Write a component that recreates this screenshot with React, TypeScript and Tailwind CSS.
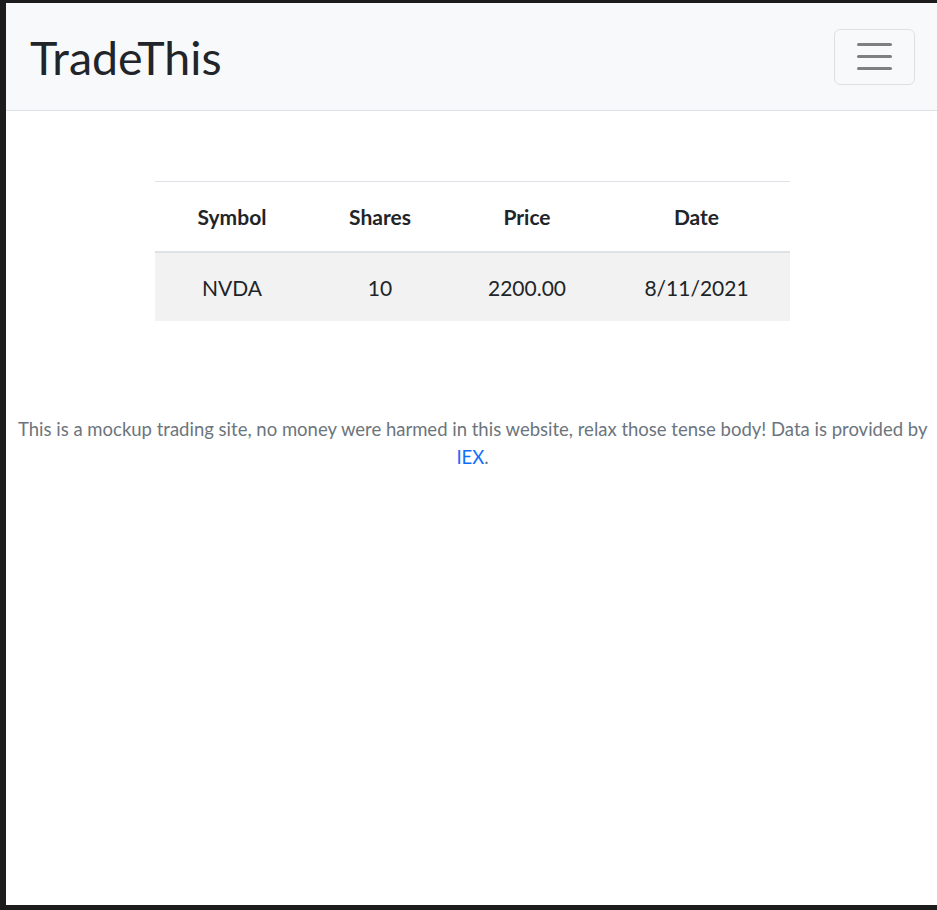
const rows = [{ symbol: 'NVDA', shares: 10, price: '2200.00', date: '8/11/2021' }];

export default function App() {
  return (
    <div className="min-h-screen bg-[#1c1c1c] pt-[3px] pl-[6px] pb-[5px]" style={{ fontFamily: 'Lato, "Noto Sans", sans-serif' }}>
      <div className="h-[902px] bg-white text-[#212529]">
        <nav className="flex h-[108px] items-center justify-between border-b border-[#dee2e6] bg-[#f8f9fa] pl-[24px] pr-[22px]">
          <span className="pt-[2px] text-[46.5px] leading-none">TradeThis</span>
          <button className="flex h-[56px] w-[81px] flex-col items-center justify-center gap-[9px] rounded-[6px] border border-black/10">
            <span className="h-[3px] w-[35px] rounded-full bg-[#7f7f7f]" />
            <span className="h-[3px] w-[35px] rounded-full bg-[#7f7f7f]" />
            <span className="h-[3px] w-[35px] rounded-full bg-[#7f7f7f]" />
          </button>
        </nav>

        <main className="flex flex-col items-center pt-[70px] pl-[2px]">
          <div className="w-[635px] text-center text-[21px]">
            <div className="grid h-[72px] grid-cols-[154px_142px_152px_187px] items-center border-t border-b-2 border-[#dee2e6] font-bold">
              <div>Symbol</div>
              <div>Shares</div>
              <div>Price</div>
              <div>Date</div>
            </div>
            {rows.map(r => (
              <div key={r.symbol} className="grid h-[68px] grid-cols-[154px_142px_152px_187px] items-center bg-[#f2f2f2]">
                <div className="pt-[2px]">{r.symbol}</div>
                <div className="pt-[2px]">{r.shares}</div>
                <div className="pt-[2px]">{r.price}</div>
                <div className="pt-[2px]">{r.date}</div>
              </div>
            ))}
          </div>

          <p className="mt-[94px] px-[8px] text-center text-[18.5px] leading-[28px] text-[#6c757d]">
            This is a mockup trading site, no money were harmed in this website, relax those tense body! Data is provided by{' '}
            <a href="#" className="text-[#0d6efd]">IEX</a>.
          </p>
        </main>
      </div>
    </div>
  );
}
